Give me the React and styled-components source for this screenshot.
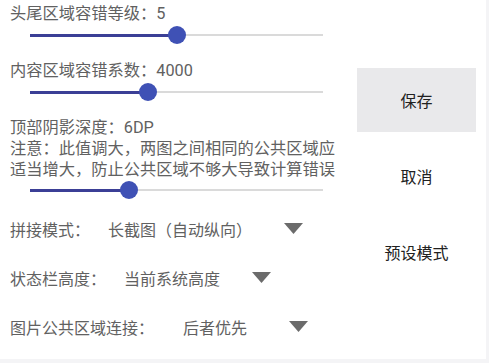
import React from 'react';
import styled, { createGlobalStyle } from 'styled-components';

const GlobalStyle = createGlobalStyle`
  html, body {
    margin: 0;
    padding: 0;
    background: #f4f4f6;
  }
  body {
    font-family: Roboto, "Noto Sans CJK SC", sans-serif;
  }
`;

const Page = styled.div`
  width: 486px;
  height: 359px;
  background: #ffffff;
  display: flex;
  overflow: hidden;
`;

const LeftCol = styled.div`
  width: 325px;
  padding: 4px 0 0 10px;
  overflow: hidden;
  display: flex;
  flex-direction: column;
`;

const Label = styled.div`
  font-size: 16.25px;
  line-height: ${p => p.$lh || 20}px;
  margin-top: ${p => p.$mt || 0}px;
  color: #616161;
  white-space: nowrap;
`;

const Note = styled.div`
  font-size: 16.25px;
  line-height: 21px;
  color: #616161;
  white-space: nowrap;
`;

const SliderBox = styled.div`
  position: relative;
  height: 22px;
  width: 293px;
  margin: ${p => p.$mt || 0}px 0 0 20px;
  flex-shrink: 0;
`;

const Track = styled.div`
  position: absolute;
  left: 0;
  right: 0;
  top: 10px;
  height: 2px;
  background: #dadada;
`;

const Active = styled.div`
  position: absolute;
  left: 0;
  top: 9.5px;
  height: 3px;
  background: #3b3f96;
`;

const Thumb = styled.div`
  position: absolute;
  top: 2px;
  width: 18px;
  height: 18px;
  margin-left: -9px;
  border-radius: 50%;
  background: #3f51b5;
`;

function Slider({ value, mt }) {
  const pct = `${value * 100}%`;
  return (
    <SliderBox $mt={mt}>
      <Track />
      <Active style={{ width: pct }} />
      <Thumb style={{ left: pct }} />
    </SliderBox>
  );
}

const Row = styled.div`
  height: 49px;
  display: flex;
  align-items: center;
  flex-shrink: 0;
  margin-top: ${p => p.$mt || 0}px;
`;

const RowLabel = styled.span`
  font-size: 16px;
  color: #616161;
  white-space: nowrap;
`;

const RowValue = styled.span`
  font-size: 16px;
  color: #616161;
  margin-left: ${p => p.$gap}px;
  white-space: nowrap;
`;

const Arrow = styled.svg`
  width: 19px;
  height: 11px;
  margin-left: ${p => p.$gap}px;
  flex-shrink: 0;
`;

function Dropdown({ label, value, valueGap, arrowGap, mt }) {
  return (
    <Row $mt={mt}>
      <RowLabel>{label}</RowLabel>
      <RowValue $gap={valueGap}>{value}</RowValue>
      <Arrow $gap={arrowGap} viewBox="0 0 19 11">
        <polygon points="0,0 19,0 9.5,11" fill="#6b6b6b" />
      </Arrow>
    </Row>
  );
}

const RightCol = styled.div`
  display: flex;
  flex-direction: column;
  gap: 12px;
  padding-top: 68px;
  margin-left: 22px;
`;

const Button = styled.div`
  width: 119px;
  height: 64px;
  display: flex;
  align-items: center;
  justify-content: center;
  font-size: 16px;
  color: #212121;
  background: ${p => (p.$filled ? '#e9e9eb' : 'transparent')};
`;

export default function App() {
  return (
    <>
      <GlobalStyle />
      <Page>
        <LeftCol>
          <Label>头尾区域容错等级：5</Label>
          <Slider value={0.502} />
          <Label $mt={15}>内容区域容错系数：4000</Label>
          <Slider value={0.403} />
          <Label $mt={14} $lh={21}>顶部阴影深度：6DP</Label>
          <Note>注意：此值调大，两图之间相同的公共区域应</Note>
          <Note>适当增大，防止公共区域不够大导致计算错误</Note>
          <Slider value={0.338} mt={-1} />
          <Dropdown label="拼接模式：" value="长截图（自动纵向）" valueGap={18} arrowGap={32} mt={3} />
          <Dropdown label="状态栏高度：" value="当前系统高度" valueGap={18} arrowGap={32} />
          <Dropdown label="图片公共区域连接：" value="后者优先" valueGap={29} arrowGap={42} />
        </LeftCol>
        <RightCol>
          <Button $filled>保存</Button>
          <Button>取消</Button>
          <Button>预设模式</Button>
        </RightCol>
      </Page>
    </>
  );
}
